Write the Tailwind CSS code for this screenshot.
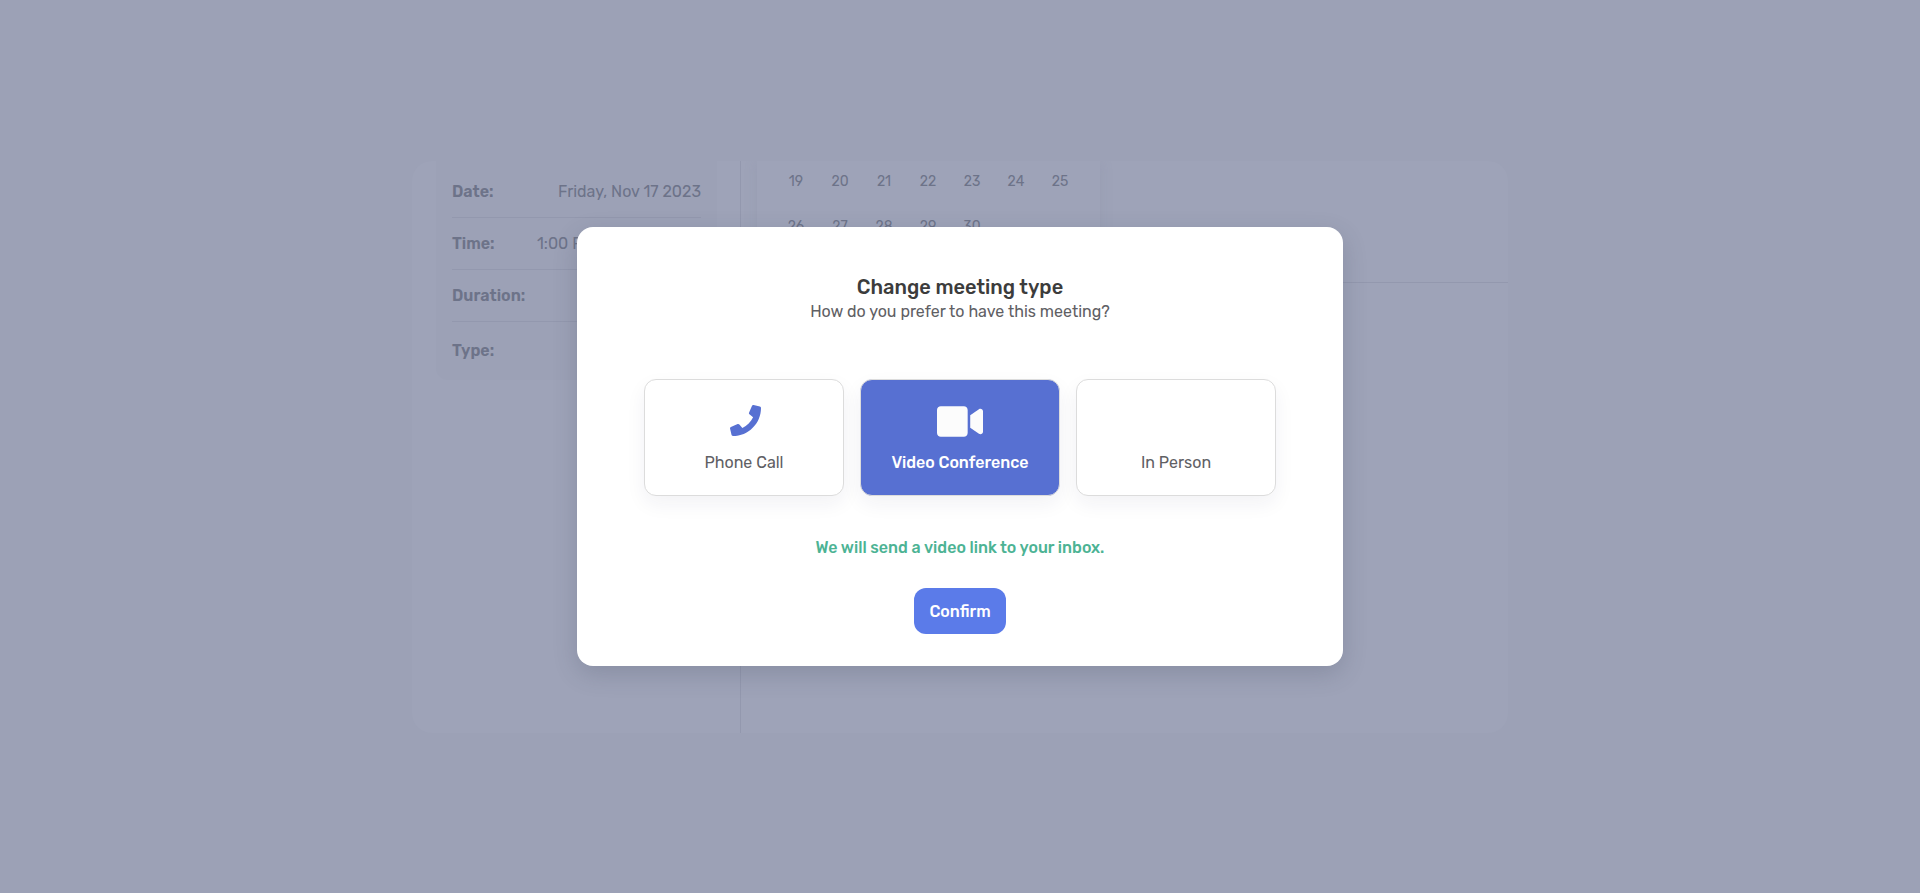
<!DOCTYPE html>
<html lang="en">
<head>
<meta charset="utf-8">
<meta name="viewport" content="width=device-width, initial-scale=1">
<title>Change meeting type</title>
<script src="https://cdn.jsdelivr.net/npm/@tailwindcss/browser@4"></script>
</head>
<body class="relative flex min-h-screen items-center justify-center overflow-hidden bg-[#9ca1b6] font-['Rubik','Inter',sans-serif] text-base text-[#6d7389]">

  <!-- Booking page behind the dialog -->
  <main class="flex h-[572px] w-full max-w-[1096px] overflow-hidden rounded-[20px] bg-[#9ea3b8]" aria-hidden="true">
    <section class="w-[329px] shrink-0 border-r border-[#9398ae] pr-[23px] pl-6">
      <dl class="rounded-b-xl bg-[#9ca1b6] px-4 pt-[5px]">
        <div class="flex h-[52px] items-center justify-between border-b border-[#9398ae] pt-0.5">
          <dt class="font-semibold">Date:</dt><dd>Friday, Nov 17 2023</dd>
        </div>
        <div class="flex h-[52px] items-center justify-between border-b border-[#9398ae] pt-0.5">
          <dt class="font-semibold">Time:</dt><dd class="w-[164px]">1:00 PM</dd>
        </div>
        <div class="flex h-[52px] items-center justify-between border-b border-[#9398ae] pt-0.5">
          <dt class="font-semibold">Duration:</dt>
        </div>
        <div class="flex h-[58px] items-center justify-between">
          <dt class="font-semibold">Type:</dt>
        </div>
      </dl>
    </section>
    <section class="flex-1">
      <div class="h-[122px] overflow-hidden border-b border-[#9398ae] pl-4">
        <div class="h-full w-[343px] bg-[#9ea3b8] px-[17px] pt-[11px] shadow-[0_0_12px_rgba(125,130,155,0.2)]">
          <table class="w-[308px] table-fixed text-center text-sm">
            <tbody>
              <tr class="h-[45px] align-top"><td>19</td><td>20</td><td>21</td><td>22</td><td>23</td><td>24</td><td>25</td></tr>
              <tr class="h-[45px] align-top"><td>26</td><td>27</td><td>28</td><td>29</td><td>30</td><td></td><td></td></tr>
            </tbody>
          </table>
        </div>
      </div>
    </section>
  </main>

  <!-- Dialog -->
  <div class="absolute inset-0 flex items-center justify-center">
    <form role="dialog" aria-labelledby="dialog-title" class="flex w-full max-w-[766px] flex-col items-center rounded-2xl bg-white px-[67px] pt-12 pb-8 text-[#5f6064] shadow-[0_8px_24px_rgba(50,60,80,0.2)]">
      <h1 id="dialog-title" class="text-xl leading-[25px] font-medium text-[#3c3c3c]">Change meeting type</h1>
      <p class="leading-6">How do you prefer to have this meeting?</p>

      <div class="mt-[55px] grid w-full grid-cols-3 gap-4" role="radiogroup" aria-labelledby="dialog-title">
        <label class="relative flex cursor-pointer flex-col items-center gap-[9px] rounded-xl border border-[#dcdcdc] bg-white pt-[21px] pb-5 shadow-[0_8px_20px_rgba(40,40,80,0.06)]">
          <input type="radio" name="type" value="phone" class="sr-only">
          <span class="flex h-[41px] items-start pt-1 pl-[3px]">
            <svg class="size-[31px] fill-[#5770d2]" viewBox="0 0 512 512" aria-hidden="true"><path d="M493.4 24.6l-104-24c-11.3-2.6-22.9 3.3-27.5 13.9l-48 112c-4.2 9.8-1.4 21.3 6.9 28l60.6 49.6c-36 76.7-98.9 140.5-177.2 177.2l-49.6-60.6c-6.8-8.3-18.2-11.1-28-6.9l-112 48C3.9 366.5-2 378.1.6 389.4l24 104C27.1 504.2 36.7 512 48 512c256.1 0 464-207.5 464-464 0-11.2-7.7-20.9-18.6-23.4z"/></svg>
          </span>
          <span class="leading-6">Phone Call</span>
        </label>
        <label class="relative flex cursor-pointer flex-col items-center gap-[9px] rounded-xl border border-[#dcdcdc] bg-[#5770d2] pt-[21px] pb-5 shadow-[0_8px_20px_rgba(40,40,80,0.06)]">
          <input type="radio" name="type" value="video" class="sr-only" checked>
          <span class="flex h-[41px] items-center">
            <svg class="h-[41px] w-[46px] fill-[#fcfcfc]" viewBox="0 0 576 512" aria-hidden="true"><path d="M336.2 64H47.8C21.4 64 0 85.4 0 111.8v288.4C0 426.6 21.4 448 47.8 448h288.4c26.4 0 47.8-21.4 47.8-47.8V111.8c0-26.4-21.4-47.8-47.8-47.8zm189.4 37.7L416 177.3v157.4l109.6 75.5c21.2 14.6 50.4-.3 50.4-25.7V127.5c0-25.4-29.1-40.4-50.4-25.8z"/></svg>
          </span>
          <span class="leading-6 font-medium text-white">Video Conference</span>
        </label>
        <label class="relative flex cursor-pointer flex-col items-center gap-[9px] rounded-xl border border-[#dcdcdc] bg-white pt-[21px] pb-5 shadow-[0_8px_20px_rgba(40,40,80,0.06)]">
          <input type="radio" name="type" value="person" class="sr-only">
          <span class="h-[41px]"></span>
          <span class="leading-6">In Person</span>
        </label>
      </div>

      <p class="mt-10 leading-6 font-medium text-[#4cb394]">We will send a video link to your inbox.</p>
      <button type="button" class="mt-7 h-[46px] w-[92px] cursor-pointer rounded-xl bg-[#5b7be9] pt-0.5 font-medium text-white">Confirm</button>
    </form>
  </div>
</body>
</html>
